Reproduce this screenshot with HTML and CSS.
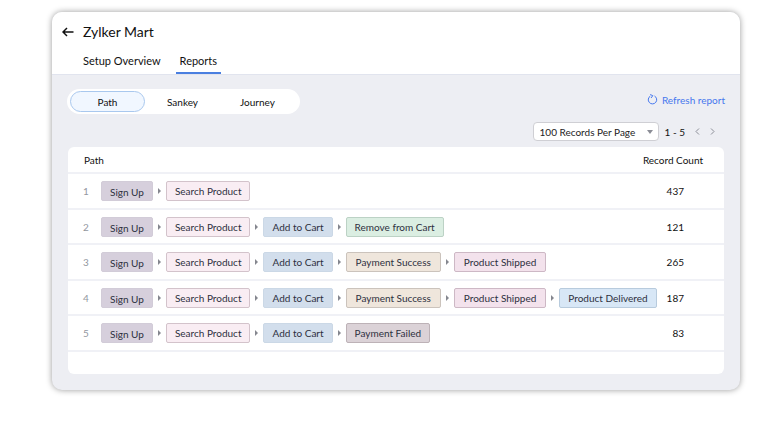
FILE: index.html
```html
<!DOCTYPE html>
<html lang="en">
<head>
    <meta charset="UTF-8">
    <meta name="viewport" content="width=device-width, initial-scale=1.0">
    <title>Zylker Mart - Reports</title>
    <link rel="stylesheet" href="styles.css">
</head>
<body>
    <main class="window">
        <header class="header">
            <div class="title-row">
                <button class="back" type="button" aria-label="Back">
                    <svg width="12" height="10" viewBox="0 0 12 10"><path d="M5 1L1 5l4 4M1 5h10.500" fill="none" stroke="currentColor" stroke-width="1.500"/></svg>
                </button>
                <h1>Zylker Mart</h1>
            </div>
            <nav class="tabs">
                <a href="#setup">Setup Overview</a>
                <a href="#reports" class="active">Reports</a>
            </nav>
        </header>

        <section class="content">
            <div class="toolbar">
                <div class="switch">
                    <button type="button" class="selected">Path</button>
                    <button type="button">Sankey</button>
                    <button type="button">Journey</button>
                </div>
                <a class="refresh" href="#refresh">
                    <svg width="11" height="11" viewBox="0 0 11 11"><path d="M7.500 2A4.200 4.200 0 1 1 3.300 2.100M3.200 0.500L5.800 1.700L4 4" fill="none" stroke="currentColor" stroke-width="1"/></svg>
                    Refresh report
                </a>
            </div>

            <div class="pager">
                <div class="select-box">
                    <select aria-label="Records per page">
                        <option>100 Records Per Page</option>
                    </select>
                </div>
                <span class="range">1 - 5</span>
                <button type="button" aria-label="Previous page">
                    <svg width="5" height="7" viewBox="0 0 5 7"><path d="M4 0.500L1 3.500l3 3" fill="none" stroke="currentColor"/></svg>
                </button>
                <button type="button" aria-label="Next page">
                    <svg width="5" height="7" viewBox="0 0 5 7"><path d="M1 0.500l3 3l-3 3" fill="none" stroke="currentColor"/></svg>
                </button>
            </div>

            <div class="panel">
                <table>
                    <colgroup>
                        <col class="col-num">
                        <col>
                        <col class="col-count">
                    </colgroup>
                    <thead>
                        <tr><th colspan="2">Path</th><th class="count">Record Count</th></tr>
                    </thead>
                    <tbody>
                        <tr>
                            <td class="num">1</td>
                            <td>
                                <div class="path">
                                    <span class="chip signup">Sign Up</span>
                                    <span class="chip search">Search Product</span>
                                </div>
                            </td>
                            <td class="count">437</td>
                        </tr>
                        <tr>
                            <td class="num">2</td>
                            <td>
                                <div class="path">
                                    <span class="chip signup">Sign Up</span>
                                    <span class="chip search">Search Product</span>
                                    <span class="chip cart">Add to Cart</span>
                                    <span class="chip remove">Remove from Cart</span>
                                </div>
                            </td>
                            <td class="count">121</td>
                        </tr>
                        <tr>
                            <td class="num">3</td>
                            <td>
                                <div class="path">
                                    <span class="chip signup">Sign Up</span>
                                    <span class="chip search">Search Product</span>
                                    <span class="chip cart">Add to Cart</span>
                                    <span class="chip success">Payment Success</span>
                                    <span class="chip shipped">Product Shipped</span>
                                </div>
                            </td>
                            <td class="count">265</td>
                        </tr>
                        <tr>
                            <td class="num">4</td>
                            <td>
                                <div class="path">
                                    <span class="chip signup">Sign Up</span>
                                    <span class="chip search">Search Product</span>
                                    <span class="chip cart">Add to Cart</span>
                                    <span class="chip success">Payment Success</span>
                                    <span class="chip shipped">Product Shipped</span>
                                    <span class="chip delivered">Product Delivered</span>
                                </div>
                            </td>
                            <td class="count">187</td>
                        </tr>
                        <tr>
                            <td class="num">5</td>
                            <td>
                                <div class="path">
                                    <span class="chip signup">Sign Up</span>
                                    <span class="chip search">Search Product</span>
                                    <span class="chip cart">Add to Cart</span>
                                    <span class="chip failed">Payment Failed</span>
                                </div>
                            </td>
                            <td class="count">83</td>
                        </tr>
                    </tbody>
                </table>
            </div>
        </section>
    </main>
</body>
</html>
```
FILE: styles.css
```css
* {
    box-sizing: border-box;
}
body {
    margin: 0;
    padding: 12px 33px 33px 52px;
    background: #fff;
    color: #111;
    font-family: Lato, sans-serif;
    font-size: 10px;
    line-height: 14px;
}
button {
    padding: 0;
    border: 0;
    background: none;
    color: inherit;
    font: inherit;
}
a {
    color: inherit;
    text-decoration: none;
}
svg {
    display: block;
}
.window {
    border-radius: 10px;
    overflow: hidden;
    background: #edeef3;
    box-shadow: 0 0 6px rgba(0, 0, 0, 0.4);
}

/* header */
.header {
    padding: 10px 10px 0;
    background: #fff;
    border-bottom: 1px solid #e1e4ee;
}
.title-row {
    display: flex;
    align-items: center;
    gap: 9px;
}
h1 {
    margin: 0;
    font-size: 14px;
    font-weight: 400;
    line-height: 20px;
}
.tabs {
    display: flex;
    gap: 15px;
    padding-left: 21px;
    margin-top: 10px;
    font-size: 11px;
}
.tabs a {
    height: 22px;
    line-height: 18px;
}
.tabs .active {
    padding: 0 4px;
    border-bottom: 2px solid #4a7fe0;
}

/* toolbar */
.content {
    padding: 14px 15px 16px;
}
.toolbar {
    display: flex;
    justify-content: space-between;
    align-items: center;
}
.switch {
    display: flex;
    padding: 2px 5px 2px 3px;
    border-radius: 13px;
    background: #fff;
}
.switch button {
    width: 75px;
    height: 21px;
    border: 1px solid transparent;
    border-radius: 11px;
}
.switch .selected {
    border-color: #a9c8ee;
    background: #f1f7ff;
}
.refresh {
    display: flex;
    align-items: center;
    gap: 4px;
    padding-bottom: 4px;
    color: #4678ee;
}
.pager {
    display: flex;
    justify-content: flex-end;
    align-items: center;
    gap: 6px;
    margin: 8px 10px 6px 0;
}
.pager button {
    margin-left: 4px;
    color: #8b8d96;
}
.select-box {
    position: relative;
}
.select-box::after {
    content: "";
    position: absolute;
    right: 6px;
    top: 8px;
    border: 3px solid transparent;
    border-top: 4px solid #8b8d96;
    border-bottom: 0;
    pointer-events: none;
}
.select-box select {
    appearance: none;
    display: block;
    width: 126px;
    height: 19px;
    padding: 0 6px;
    border: 1px solid #cfcfd4;
    border-radius: 4px;
    background: #fff;
    color: #222;
    font: inherit;
}

/* table */
.panel {
    margin: 0 1px;
    padding-bottom: 22px;
    border-radius: 6px;
    background: #fff;
}
table {
    width: 100%;
    table-layout: fixed;
    border-collapse: separate;
    border-spacing: 0;
}
.col-num {
    width: 33px;
}
.col-count {
    width: 82px;
}
th,
td {
    padding: 0;
    border-bottom: 2px solid #f0f1f6;
    font-weight: 400;
    text-align: left;
    white-space: nowrap;
}
th {
    height: 27px;
    padding-left: 16px;
}
td {
    height: 36px;
}
tbody tr:nth-child(even) td {
    height: 35px;
}
.num {
    padding-left: 15px;
    color: #92979f;
}
th.count {
    padding: 0 21px 0 0;
    text-align: right;
}
td.count {
    padding-right: 40px;
    text-align: right;
}
.path {
    display: flex;
    gap: 13px;
}
.chip {
    position: relative;
    flex: none;
    height: 20px;
    padding: 0 8px;
    border: 1px solid;
    border-radius: 2px;
    color: #2d3040;
    line-height: 18px;
}
.chip + .chip::before {
    content: "";
    position: absolute;
    left: -9px;
    top: 6px;
    border: 3px solid transparent;
    border-left: 3px solid #85878f;
    border-right: 0;
}
.signup {
    padding-top: 1px;
    border-color: #d2ccd8;
    background: #d6cfdc;
}
.search {
    border-color: #d3c3cb;
    background: #f9edf3;
}
.cart {
    border-color: #cbd8e6;
    background: #d2deec;
}
.remove {
    border-color: #bcd2c5;
    background: #dbeee2;
}
.success {
    padding: 0 9px;
    border-color: #cbc3bc;
    background: #efe6dc;
}
.shipped {
    padding: 0 9px;
    border-color: #cdb8c5;
    background: #f3e2ec;
}
.delivered {
    border-color: #b8cbdd;
    background: #d8e7f6;
}
.failed {
    border-color: #bdb2b7;
    background: #dbd2d7;
}
```
